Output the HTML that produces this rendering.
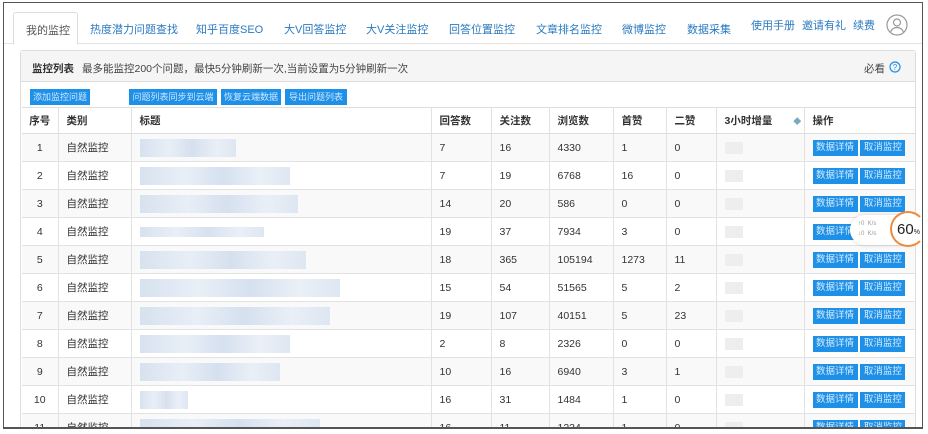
<!DOCTYPE html>
<html><head><meta charset="utf-8"><style>
*{margin:0;padding:0;box-sizing:border-box}
body{width:928px;height:434px;background:#fff;font-family:"Liberation Sans","Noto Sans CJK SC",sans-serif;color:#333;overflow:hidden;position:relative}
.frame{position:absolute;left:3px;top:2px;width:920px;height:427px;border:1px solid #555;border-bottom:2px solid #555;overflow:hidden}
.tabs{position:absolute;left:0;top:0;width:918px;height:41px;border-bottom:1px solid #e3e3e3}
.tab{position:absolute;top:18px;font-size:11px;color:#2a7ac0}
.tab.act{left:9px;top:9px;width:65px;height:33px;border:1px solid #ddd;border-bottom:1px solid #fff;background:#fff;border-radius:3px 3px 0 0;color:#555;padding-top:9px;padding-left:12px}
.panel{position:absolute;left:16px;top:47px;width:896px;height:400px;border:1px solid #ddd;border-radius:3px}
.ph{height:31px;background:#f5f5f5;border-bottom:1px solid #ddd;font-size:10.5px;padding:10px 0 0 11px;color:#444}
.ph b{color:#333;margin-right:8px}
.btn{position:absolute;height:16px;line-height:16px;background:#1e90e8;color:#cfe8ff;font-size:9px;text-align:center;white-space:nowrap}
table{position:absolute;left:1px;top:56px;border-collapse:collapse;table-layout:fixed;font-size:10.5px}
td,th{height:28px;border-top:1px solid #e2e2e2;border-left:1px solid #e2e2e2;padding-left:8px;text-align:left;white-space:nowrap;overflow:hidden}
th{font-weight:bold;height:26px;border-top:1px solid #ddd;border-bottom:1px solid #ddd}
tr:nth-child(even) td{background:#f9f9f9}
td:first-child,th:first-child{border-left:none;text-align:center;padding-left:0}
.blur{display:inline-block;height:18px;vertical-align:middle;background:linear-gradient(90deg,#d3dfee,#e6edf6 30%,#d1ddee 55%,#e8eef6 80%,#dae4f1);opacity:.9}
.b{display:inline-block;width:45px;height:16px;line-height:16px;text-align:center;background:#1e90e8;color:#d5ebff;font-size:9.5px;vertical-align:middle}
.g{display:inline-block;width:18px;height:12px;background:#eee;vertical-align:middle}
</style></head><body>
<div class="frame">
<div class="tabs">
<div class="tab act">我的监控</div>
<div class="tab" style="left:86px">热度潜力问题查找</div>
<div class="tab" style="left:192px">知乎百度SEO</div>
<div class="tab" style="left:280px">大V回答监控</div>
<div class="tab" style="left:362px">大V关注监控</div>
<div class="tab" style="left:445px">回答位置监控</div>
<div class="tab" style="left:532px">文章排名监控</div>
<div class="tab" style="left:618px">微博监控</div>
<div class="tab" style="left:683px">数据采集</div>
<div class="tab" style="left:747px;top:14px">使用手册</div>
<div class="tab" style="left:798px;top:14px">邀请有礼</div>
<div class="tab" style="left:849px;top:14px">续费</div>
<svg style="position:absolute;left:882px;top:11px" width="22" height="22" viewBox="0 0 22 22"><circle cx="11" cy="11" r="10" fill="none" stroke="#999" stroke-width="1.2"/><circle cx="11" cy="8.5" r="3.5" fill="none" stroke="#999" stroke-width="1.2"/><path d="M4.5 18c1.5-3.5 4-4.5 6.5-4.5s5 1 6.5 4.5" fill="none" stroke="#999" stroke-width="1.2"/></svg>
</div>
<div class="panel">
<div class="ph"><b>监控列表</b>最多能监控200个问题，最快5分钟刷新一次,当前设置为5分钟刷新一次
<span style="position:absolute;right:30px;top:10px">必看</span>
<svg style="position:absolute;right:14px;top:10px" width="12" height="12" viewBox="0 0 12 12"><circle cx="6" cy="6" r="5" fill="none" stroke="#1e90e8" stroke-width="1.2"/><text x="6" y="9" font-size="8" text-anchor="middle" fill="#1e90e8" font-family="Liberation Sans">?</text></svg>
</div>
<div class="btn" style="left:9px;top:38px;width:60px">添加监控问题</div>
<div class="btn" style="left:108px;top:38px;width:88px">问题列表同步到云端</div>
<div class="btn" style="left:200px;top:38px;width:60px">恢复云端数据</div>
<div class="btn" style="left:264px;top:38px;width:62px">导出问题列表</div>
<table>
<colgroup><col style="width:36px"><col style="width:73px"><col style="width:300px"><col style="width:60px"><col style="width:58px"><col style="width:64px"><col style="width:53px"><col style="width:50px"><col style="width:88px"><col style="width:111px"></colgroup>
<tr><th>序号</th><th>类别</th><th>标题</th><th>回答数</th><th>关注数</th><th>浏览数</th><th>首赞</th><th>二赞</th><th>3小时增量 <span style="color:#7ab;margin-left:18px;font-size:8px">◆</span></th><th>操作</th></tr>
<tr><td>1</td><td>自然监控</td><td><span class="blur" style="width:96px"></span></td><td>7</td><td>16</td><td>4330</td><td>1</td><td>0</td><td><span class="g"></span></td><td><span class="b">数据详情</span> <span class="b">取消监控</span></td></tr>
<tr><td>2</td><td>自然监控</td><td><span class="blur" style="width:150px"></span></td><td>7</td><td>19</td><td>6768</td><td>16</td><td>0</td><td><span class="g"></span></td><td><span class="b">数据详情</span> <span class="b">取消监控</span></td></tr>
<tr><td>3</td><td>自然监控</td><td><span class="blur" style="width:158px"></span></td><td>14</td><td>20</td><td>586</td><td>0</td><td>0</td><td><span class="g"></span></td><td><span class="b">数据详情</span> <span class="b">取消监控</span></td></tr>
<tr><td>4</td><td>自然监控</td><td><span class="blur" style="width:124px;height:10px"></span></td><td>19</td><td>37</td><td>7934</td><td>3</td><td>0</td><td><span class="g"></span></td><td><span class="b">数据详情</span> <span class="b">取消监控</span></td></tr>
<tr><td>5</td><td>自然监控</td><td><span class="blur" style="width:166px"></span></td><td>18</td><td>365</td><td>105194</td><td>1273</td><td>11</td><td><span class="g"></span></td><td><span class="b">数据详情</span> <span class="b">取消监控</span></td></tr>
<tr><td>6</td><td>自然监控</td><td><span class="blur" style="width:200px"></span></td><td>15</td><td>54</td><td>51565</td><td>5</td><td>2</td><td><span class="g"></span></td><td><span class="b">数据详情</span> <span class="b">取消监控</span></td></tr>
<tr><td>7</td><td>自然监控</td><td><span class="blur" style="width:190px"></span></td><td>19</td><td>107</td><td>40151</td><td>5</td><td>23</td><td><span class="g"></span></td><td><span class="b">数据详情</span> <span class="b">取消监控</span></td></tr>
<tr><td>8</td><td>自然监控</td><td><span class="blur" style="width:150px"></span></td><td>2</td><td>8</td><td>2326</td><td>0</td><td>0</td><td><span class="g"></span></td><td><span class="b">数据详情</span> <span class="b">取消监控</span></td></tr>
<tr><td>9</td><td>自然监控</td><td><span class="blur" style="width:140px"></span></td><td>10</td><td>16</td><td>6940</td><td>3</td><td>1</td><td><span class="g"></span></td><td><span class="b">数据详情</span> <span class="b">取消监控</span></td></tr>
<tr><td>10</td><td>自然监控</td><td><span class="blur" style="width:48px"></span></td><td>16</td><td>31</td><td>1484</td><td>1</td><td>0</td><td><span class="g"></span></td><td><span class="b">数据详情</span> <span class="b">取消监控</span></td></tr>
<tr><td>11</td><td>自然监控</td><td><span class="blur" style="width:180px"></span></td><td>16</td><td>11</td><td>1234</td><td>1</td><td>0</td><td><span class="g"></span></td><td><span class="b">数据详情</span> <span class="b">取消监控</span></td></tr>
</table>
</div>
<div style="position:absolute;left:846px;top:212px;width:72px;height:30px;background:#fff;border-radius:15px;box-shadow:0 0 4px rgba(0,0,0,.15);font-size:6px;color:#999">
<div style="position:absolute;left:8px;top:6px"><span style="color:#3a3">↑</span>0 &nbsp;K/s</div>
<div style="position:absolute;left:8px;top:16px"><span style="color:#e80">↓</span>0 &nbsp;K/s</div>
</div>
<div style="position:absolute;left:886px;top:208px;width:36px;height:36px;border-radius:50%;background:#fff;border:2px solid #ee8a3a;border-right-color:#fff;font-size:15px;color:#222;padding:8px 0 0 5px">60<span style="font-size:7px">%</span></div>
</div>
</body></html>
